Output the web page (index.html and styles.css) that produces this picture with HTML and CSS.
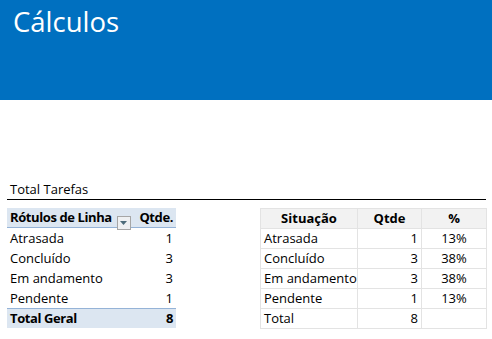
FILE: index.html
```html
<!DOCTYPE html>
<html lang="pt">
<head>
<meta charset="utf-8">
<title>Cálculos</title>
<link rel="stylesheet" href="styles.css">
</head>
<body>
<header class="banner">
  <h1 class="banner-title">Cálculos</h1>
</header>
<main class="content">
  <div class="section-title">Total Tarefas</div>
  <div class="tables">
    <div class="pivot">
      <div class="pv-head pv-label">Rótulos de Linha <span class="dropdown"><svg width="7" height="4" viewBox="0 0 7 4"><path d="M0 0h7L3.5 4z" fill="#4d6b7a"/></svg></span></div>
      <div class="pv-head pv-num">Qtde.</div>
      <div class="pv-label">Atrasada</div><div class="pv-num">1</div>
      <div class="pv-label">Concluído</div><div class="pv-num">3</div>
      <div class="pv-label">Em andamento</div><div class="pv-num">3</div>
      <div class="pv-label">Pendente</div><div class="pv-num">1</div>
      <div class="pv-total pv-label">Total Geral</div><div class="pv-total pv-num">8</div>
    </div>
    <div class="summary">
      <div class="sm-head">Situação</div><div class="sm-head">Qtde</div><div class="sm-head">%</div>
      <div>Atrasada</div><div class="sm-num">1</div><div class="sm-pct">13%</div>
      <div>Concluído</div><div class="sm-num">3</div><div class="sm-pct">38%</div>
      <div>Em andamento</div><div class="sm-num">3</div><div class="sm-pct">38%</div>
      <div>Pendente</div><div class="sm-num">1</div><div class="sm-pct">13%</div>
      <div>Total</div><div class="sm-num">8</div><div class="sm-pct"></div>
    </div>
  </div>
</main>
</body>
</html>
```
FILE: styles.css
```css
* { box-sizing: border-box; }
html, body { margin: 0; padding: 0; background: #fff; }
body {
  font-family: "Open Sans", "Noto Sans", "Liberation Sans", sans-serif;
  font-size: 13px;
  color: #000;
  width: 492px;
  height: 339px;
  overflow: hidden;
}
.banner {
  height: 100px;
  background: #0070c0;
  padding: 3px 0 0 13px;
}
.banner-title {
  margin: 0;
  font-weight: 400;
  font-size: 27.5px;
  line-height: 38px;
  color: #fff;
}
.content {
  padding: 80px 6px 0 7px;
}
.section-title {
  height: 20px;
  line-height: 19px;
  padding-left: 3px;
  border-bottom: 1px solid #000;
}
.tables {
  display: flex;
  justify-content: space-between;
  align-items: flex-start;
  margin-top: 8px;
}
.pivot {
  display: grid;
  grid-template-columns: 126px 43px;
  grid-auto-rows: 20px;
  width: 169px;
}
.pivot > div {
  padding: 0 3px;
  line-height: 20px;
  white-space: nowrap;
}
.pv-num { text-align: right; }
.pv-head, .pv-total {
  font-weight: 700;
  background: #dce6f1;
  letter-spacing: -0.4px;
}
.pv-head { border-bottom: 1px solid #95b3d7; line-height: 19px !important; }
.pv-total { border-top: 1px solid #95b3d7; line-height: 18px !important; }
.dropdown {
  display: inline-flex;
  align-items: center;
  justify-content: center;
  width: 14px;
  height: 14px;
  margin-left: 2px;
  vertical-align: -3px;
  border: 1px solid #a6a6a6;
  background: #eef0f2;
}
.summary {
  display: grid;
  grid-template-columns: 96px 63px 64px;
  grid-auto-rows: 19px;
  gap: 1px;
  padding: 1px;
  background: #e3e3e3;
  width: 227px;
  margin-right: -1px;
}
.summary > div {
  background: #fff;
  padding: 0 3px;
  line-height: 19px;
  white-space: nowrap;
}
.summary > .sm-head {
  background: #f2f2f2;
  font-weight: 700;
  text-align: center;
}
.sm-num { text-align: right; }
.sm-pct { text-align: center; }
```
